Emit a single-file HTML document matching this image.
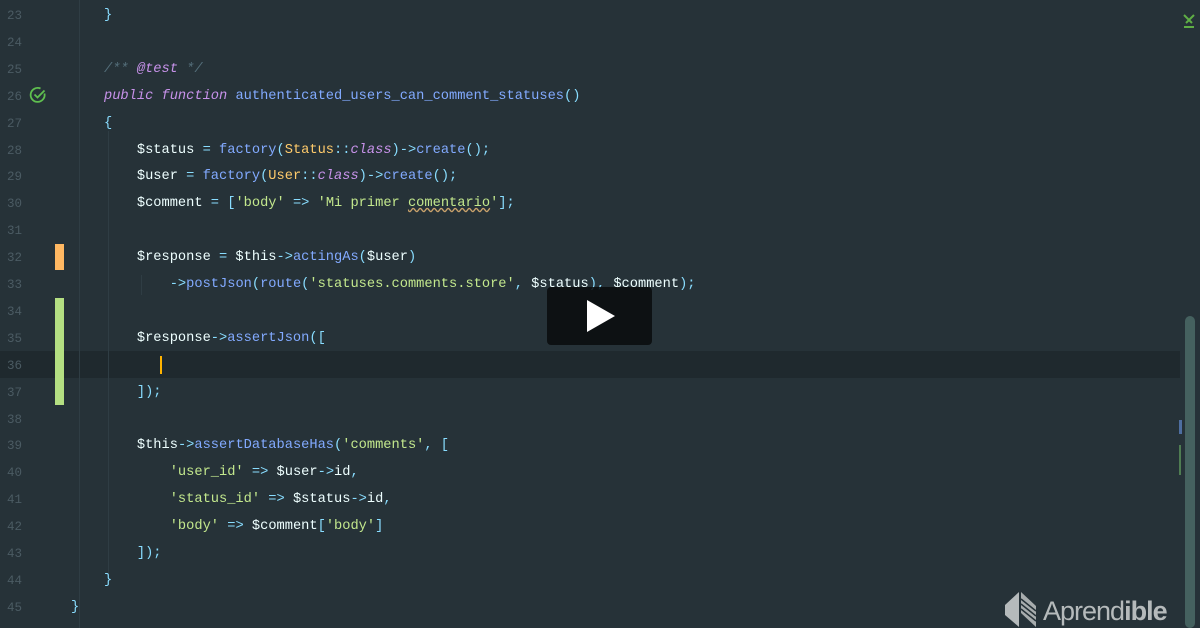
<!DOCTYPE html>
<html style="overflow:hidden;height:628px"><head><meta charset="utf-8"><style>
body{margin:0;width:1200px;height:628px;background:#263238;overflow:hidden;position:relative;font-family:"Liberation Mono",monospace;font-size:13.7px;}
.l{position:absolute;left:0;height:26.9px;line-height:26.9px;white-space:pre;width:1180px}
.n{position:absolute;left:0;width:22px;text-align:right;color:#4b5b63;font-size:12.5px}
.c{position:absolute;left:104px;color:#eeffff}
.k{color:#c792ea;font-style:italic}.f{color:#82aaff}.s{color:#c3e88d}.y{color:#ffcb6b}.o{color:#89ddff}.cm{color:#546e7a;font-style:italic}.v{color:#eeffff}
.guide{position:absolute;width:1px;background:#2f3d44}
#w{position:absolute;left:0;top:3px;width:1200px;height:620px;overflow:hidden}
</style></head><body>
<div style="position:absolute;left:0;top:351px;width:1180px;height:27px;background:#1f292e"></div>
<div class="guide" style="left:79px;top:0;height:628px"></div>
<div class="guide" style="left:108px;top:131px;height:444px"></div>
<div class="guide" style="left:141px;top:275px;height:20px"></div>
<div style="position:absolute;left:55px;top:244px;width:9px;height:26px;background:#ffb862"></div>
<div style="position:absolute;left:55px;top:298px;width:9px;height:107px;background:#b4df82"></div>
<div style="position:absolute;left:160px;top:356px;width:2px;height:18px;background:#ffb300"></div>
<svg style="position:absolute;left:29px;top:86px" width="18" height="18" viewBox="0 0 18 18"><path d="M15.5 7.5A7 7 0 1 1 11.5 2.5" fill="none" stroke="#5fbf4f" stroke-width="1.8"/><path d="M5.5 8.5l3 3 7-7" fill="none" stroke="#5fbf4f" stroke-width="1.8"/></svg>
<svg style="position:absolute;left:1183px;top:14px" width="14" height="14" viewBox="0 0 14 14"><path d="M1 1l5 5 5-5M3 9l3-3 3 3M1 13h10" fill="none" stroke="#5fae45" stroke-width="2"/></svg>
<div style="position:absolute;left:1185px;top:316px;width:10px;height:312px;border-radius:5px;background:#45615f"></div>
<div style="position:absolute;left:1179px;top:420px;width:3px;height:14px;background:#4e6ea0"></div>
<div style="position:absolute;left:1179px;top:445px;width:2px;height:30px;background:#4f7c52"></div>
<div id="w">
<div class="l" style="top:0"><span class="n">23</span><span class="c"><span class="o">}</span></span></div>
<div class="l" style="top:26.9px"><span class="n">24</span></div>
<div class="l" style="top:53.8px"><span class="n">25</span><span class="c"><span class="cm">/** </span><span class="k">@test</span><span class="cm"> */</span></span></div>
<div class="l" style="top:80.7px"><span class="n">26</span><span class="c"><span class="k">public function</span> <span class="f">authenticated_users_can_comment_statuses</span><span class="o">()</span></span></div>
<div class="l" style="top:107.6px"><span class="n">27</span><span class="c"><span class="o">{</span></span></div>
<div class="l" style="top:134.5px"><span class="n">28</span><span class="c">    $status <span class="o">=</span> <span class="f">factory</span><span class="o">(</span><span class="y">Status</span><span class="o">::</span><span class="k">class</span><span class="o">)-&gt;</span><span class="f">create</span><span class="o">();</span></span></div>
<div class="l" style="top:161.4px"><span class="n">29</span><span class="c">    $user <span class="o">=</span> <span class="f">factory</span><span class="o">(</span><span class="y">User</span><span class="o">::</span><span class="k">class</span><span class="o">)-&gt;</span><span class="f">create</span><span class="o">();</span></span></div>
<div class="l" style="top:188.3px"><span class="n">30</span><span class="c">    $comment <span class="o">= [</span><span class="s">'body'</span> <span class="o">=&gt;</span> <span class="s">'Mi primer <span style="text-decoration:underline wavy #c9a26b">comentario</span>'</span><span class="o">];</span></span></div>
<div class="l" style="top:215.2px"><span class="n">31</span></div>
<div class="l" style="top:242.1px"><span class="n">32</span><span class="c">    $response <span class="o">=</span> $this<span class="o">-&gt;</span><span class="f">actingAs</span><span class="o">(</span>$user<span class="o">)</span></span></div>
<div class="l" style="top:269px"><span class="n">33</span><span class="c">        <span class="o">-&gt;</span><span class="f">postJson</span><span class="o">(</span><span class="f">route</span><span class="o">(</span><span class="s">'statuses.comments.store'</span><span class="o">,</span> $status<span class="o">),</span> $comment<span class="o">);</span></span></div>
<div class="l" style="top:295.9px"><span class="n">34</span></div>
<div class="l" style="top:322.8px"><span class="n">35</span><span class="c">    $response<span class="o">-&gt;</span><span class="f">assertJson</span><span class="o">([</span></span></div>
<div class="l" style="top:349.7px"><span class="n">36</span></div>
<div class="l" style="top:376.6px"><span class="n">37</span><span class="c">    <span class="o">]);</span></span></div>
<div class="l" style="top:403.5px"><span class="n">38</span></div>
<div class="l" style="top:430.4px"><span class="n">39</span><span class="c">    $this<span class="o">-&gt;</span><span class="f">assertDatabaseHas</span><span class="o">(</span><span class="s">'comments'</span><span class="o">, [</span></span></div>
<div class="l" style="top:457.3px"><span class="n">40</span><span class="c">        <span class="s">'user_id'</span> <span class="o">=&gt;</span> $user<span class="o">-&gt;</span>id<span class="o">,</span></span></div>
<div class="l" style="top:484.2px"><span class="n">41</span><span class="c">        <span class="s">'status_id'</span> <span class="o">=&gt;</span> $status<span class="o">-&gt;</span>id<span class="o">,</span></span></div>
<div class="l" style="top:511.1px"><span class="n">42</span><span class="c">        <span class="s">'body'</span> <span class="o">=&gt;</span> $comment<span class="o">[</span><span class="s">'body'</span><span class="o">]</span></span></div>
<div class="l" style="top:538px"><span class="n">43</span><span class="c">    <span class="o">]);</span></span></div>
<div class="l" style="top:564.9px"><span class="n">44</span><span class="c"><span class="o">}</span></span></div>
<div class="l" style="top:591.8px"><span class="n">45</span><span class="c" style="left:71px"><span class="o">}</span></span></div>
</div>
<div style="position:absolute;left:547px;top:287px;width:105px;height:58px;border-radius:4px;background:rgba(10,12,14,0.88)"></div>
<svg style="position:absolute;left:585px;top:298px" width="32" height="36" viewBox="0 0 32 36"><path d="M2 2L30 18 2 34Z" fill="#fff"/></svg>

<svg style="position:absolute;left:1005px;top:591px" width="32" height="36" viewBox="0 0 32 36"><path d="M0 14L14 1V36L0 24Z" fill="#b5babb"/><path d="M16 1L31 15V36L16 22Z" fill="#a7acad"/><path d="M16 8L31 20M16 13L31 25M16 18L31 30" stroke="#263238" stroke-width="1.5"/></svg>
<div style="position:absolute;left:1043px;top:594px;font-family:'Liberation Sans',sans-serif;font-size:27px;color:#b5babb;letter-spacing:-1px;line-height:34px;height:34px;overflow:hidden"><span style="font-weight:300">Aprend</span><b>ible</b></div>
</body></html>
